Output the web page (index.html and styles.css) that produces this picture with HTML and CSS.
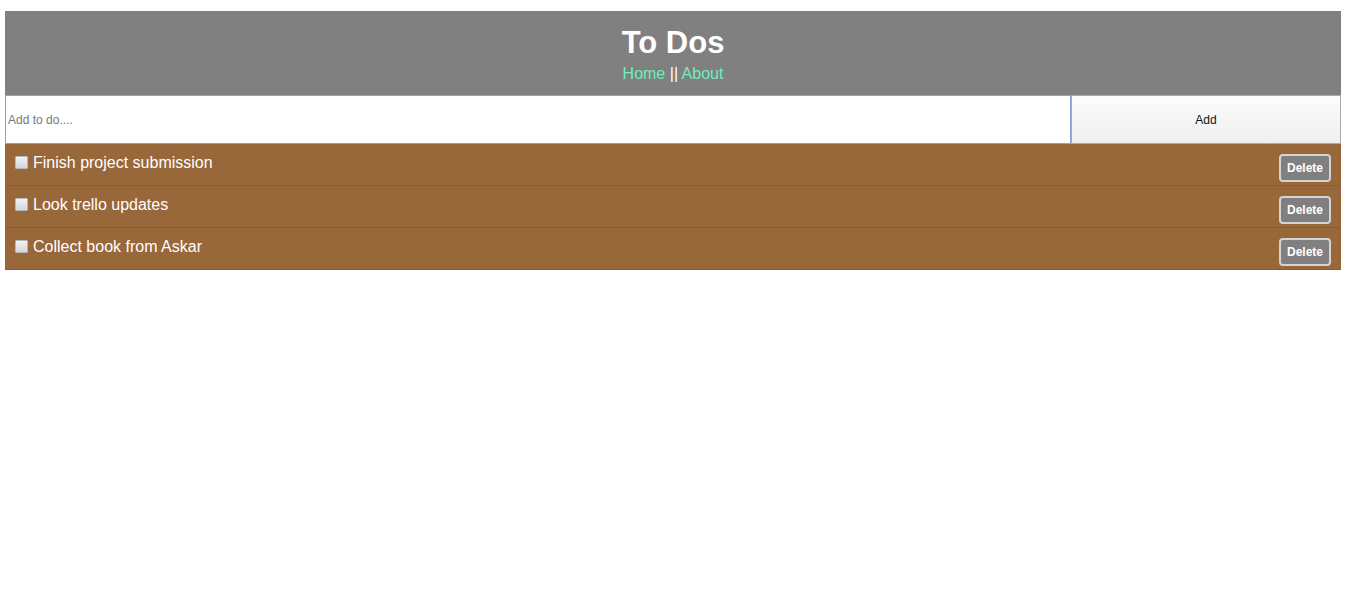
FILE: index.html
```html
<!DOCTYPE html>
<html>
<head>
<meta charset="utf-8">
<title>To Dos</title>
<link rel="stylesheet" href="styles.css">
</head>
<body>
<div class="app">
  <header class="header">
    <h1 class="title">To Dos</h1>
    <nav class="nav"><a class="link" href="#">Home</a> <span class="sep">||</span> <a class="link" href="#">About</a></nav>
  </header>
  <form class="add-form">
    <input class="add-input" type="text" placeholder="Add to do....">
    <button class="add-btn" type="button">Add</button>
  </form>
  <ul class="list">
    <li class="item"><label class="item-label"><input class="check" type="checkbox"> Finish project submission</label><button class="del-btn" type="button">Delete</button></li>
    <li class="item"><label class="item-label"><input class="check" type="checkbox"> Look trello updates</label><button class="del-btn" type="button">Delete</button></li>
    <li class="item"><label class="item-label"><input class="check" type="checkbox"> Collect book from Askar</label><button class="del-btn" type="button">Delete</button></li>
  </ul>
</div>
</body>
</html>
```

FILE: styles.css
```css
html, body {
  margin: 0;
  padding: 0;
  background: #fff;
  font-family: "Liberation Sans", Arial, sans-serif;
}

.app {
  margin: 11px 9px 0 5px;
}

.header {
  background: #808080;
  color: #fff;
  text-align: center;
  padding: 13px 10px 12px;
}

.title {
  margin: 0 0 4px;
  font-size: 31px;
  line-height: 37px;
  font-weight: bold;
}

.nav {
  font-size: 16px;
  line-height: 18px;
}

.link {
  color: #72ecbe;
  text-decoration: none;
}

.sep {
  color: #fff;
}

.add-form {
  display: flex;
  margin: 0;
  height: 49px;
}

.add-input {
  flex: 1;
  min-width: 0;
  box-sizing: border-box;
  height: 49px;
  margin: 0;
  padding: 0 2px;
  border: 1px solid #87a3d6;
  font-family: "Liberation Sans", Arial, sans-serif;
  font-size: 12px;
  outline: none;
}

.add-input::placeholder {
  color: #777;
}

.add-btn {
  width: 270px;
  box-sizing: border-box;
  height: 49px;
  margin: 0;
  border: 1px solid #a9a9a9;
  background: linear-gradient(#fcfcfc, #efefef);
  font-family: "Liberation Sans", Arial, sans-serif;
  font-size: 12px;
  color: #111;
}

.list {
  list-style: none;
  margin: 0;
  padding: 0;
}

.item {
  display: flex;
  justify-content: space-between;
  align-items: flex-start;
  background: #98673a;
  color: #fff;
  padding: 9px 10px 2px 10px;
  height: 30px;
  border-bottom: 1px solid #76624e;
  font-size: 16px;
}

.item-label {
  display: flex;
  align-items: center;
  gap: 5px;
  line-height: 20px;
}

.check {
  appearance: none;
  -webkit-appearance: none;
  box-sizing: border-box;
  width: 13px;
  height: 13px;
  margin: -2px 0 0 0;
  border: 1px solid #b8b8b8;
  border-radius: 1px;
  background: linear-gradient(#f2f2f2, #d6d6d6);
}

.del-btn {
  margin-top: 1px;
  box-sizing: border-box;
  height: 28px;
  padding: 0 6px;
  background: #808080;
  color: #fff;
  border: 2px solid #d4d4d4;
  border-radius: 4px;
  font-family: "Liberation Sans", Arial, sans-serif;
  font-weight: bold;
  font-size: 12px;
}
```
